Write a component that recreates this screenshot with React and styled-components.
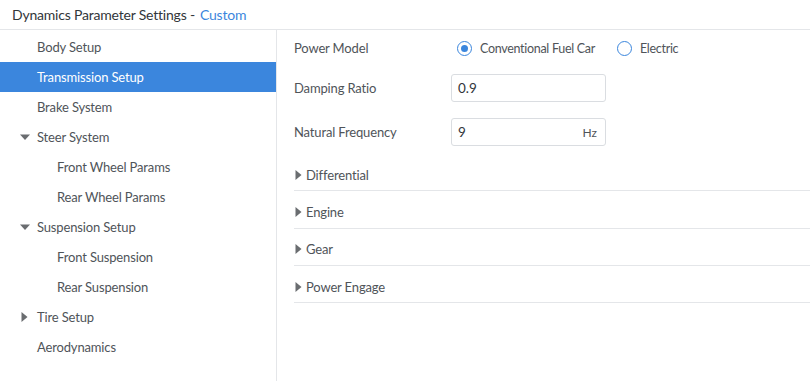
import React, { useState } from 'react'
import styled, { createGlobalStyle } from 'styled-components'

const GlobalStyle = createGlobalStyle`
  html, body { margin:0; padding:0; background:#fff; }
  body { font-family: Lato, "Noto Sans", sans-serif; color:#4f5459; }
  * { box-sizing:border-box; }
`

const Page = styled.div`
  width:810px;
  height:381px;
  display:flex;
  flex-direction:column;
  overflow:hidden;
`

const Header = styled.header`
  height:30px;
  flex:0 0 30px;
  display:flex;
  align-items:center;
  padding:0 12px 1px;
  border-bottom:1.5px solid #e4e6e9;
  font-size:14px;
  letter-spacing:-0.2px;
  color:#32363a;
  span { color:#3b86dd; margin-left:5px; }
`

const Body = styled.div`
  flex:1;
  display:flex;
  min-height:0;
`

const Sidebar = styled.nav`
  width:277px;
  flex:0 0 277px;
  border-right:1px solid #e4e6e9;
  padding-top:1.5px;
`

const NavItem = styled.div`
  height:30.1px;
  display:flex;
  align-items:center;
  padding-left:${p => p.$depth * 20 + 20}px;
  font-size:13px;
  letter-spacing:-0.15px;
  background:${p => p.$active ? '#3b86dd' : 'transparent'};
  color:${p => p.$active ? '#fff' : '#4f5459'};
`

const Caret = styled.span`
  width:${p => p.$w || 17}px;
  flex:0 0 ${p => p.$w || 17}px;
  display:flex;
  align-items:center;
  svg { display:block; }
`

const Content = styled.main`
  flex:1;
  padding:0 0 0 17px;
`

const FormRow = styled.div`
  display:flex;
  align-items:center;
  height:${p => p.$h}px;
`

const Label = styled.div`
  width:157px;
  font-size:13px;
  letter-spacing:-0.15px;
`

const RadioGroup = styled.div`
  display:flex;
  align-items:center;
  margin-left:6px;
`

const RadioOption = styled.label`
  display:flex;
  align-items:center;
  font-size:12.5px;
  letter-spacing:-0.3px;
  margin-right:22px;
  color:#4f5459;
`

const RadioCircle = styled.span`
  width:15px;
  height:15px;
  border-radius:50%;
  border:1.5px solid #3b86dd;
  margin-right:8px;
  display:flex;
  align-items:center;
  justify-content:center;
  &::after {
    content:'';
    width:7px;
    height:7px;
    border-radius:50%;
    background:${p => p.$checked ? '#3b86dd' : 'transparent'};
  }
`

const InputBox = styled.div`
  width:155px;
  height:28px;
  border:1px solid #dadde1;
  border-radius:3px;
  display:flex;
  align-items:center;
  justify-content:space-between;
  padding:0 8px 0 6px;
  font-size:13.5px;
  color:#32363a;
  small { font-size:12px; color:#4f5459; }
`

const Section = styled.div`
  height:37.3px;
  display:flex;
  align-items:center;
  border-bottom:1.5px solid #e4e6e9;
  font-size:13px;
  letter-spacing:-0.15px;
  padding-top:5px;
`

const Tri = ({ down }) => (
  <svg width="10" height="10" viewBox="0 0 10 10">
    {down
      ? <path d="M0 2.5 L10 2.5 L5 8 Z" fill="#6a6d70" />
      : <path d="M1.5 0 L7.5 5 L1.5 10 Z" fill="#6a6d70" />}
  </svg>
)

const nav = [
  { label: 'Body Setup', depth: 0 },
  { label: 'Transmission Setup', depth: 0, active: true },
  { label: 'Brake System', depth: 0 },
  { label: 'Steer System', depth: 0, caret: 'down' },
  { label: 'Front Wheel Params', depth: 1 },
  { label: 'Rear Wheel Params', depth: 1 },
  { label: 'Suspension Setup', depth: 0, caret: 'down' },
  { label: 'Front Suspension', depth: 1 },
  { label: 'Rear Suspension', depth: 1 },
  { label: 'Tire Setup', depth: 0, caret: 'right' },
  { label: 'Aerodynamics', depth: 0 },
]

export default function App() {
  const [model, setModel] = useState('fuel')
  return (
    <Page>
      <GlobalStyle />
      <Header>Dynamics Parameter Settings - <span>Custom</span></Header>
      <Body>
        <Sidebar>
          {nav.map(n => (
            <NavItem key={n.label} $depth={n.depth} $active={n.active}>
              <Caret>{n.caret && <Tri down={n.caret === 'down'} />}</Caret>
              {n.label}
            </NavItem>
          ))}
        </Sidebar>
        <Content>
          <FormRow $h={36}>
            <Label>Power Model</Label>
            <RadioGroup>
              <RadioOption onClick={() => setModel('fuel')}>
                <RadioCircle $checked={model === 'fuel'} />Conventional Fuel Car
              </RadioOption>
              <RadioOption onClick={() => setModel('electric')}>
                <RadioCircle $checked={model === 'electric'} />Electric
              </RadioOption>
            </RadioGroup>
          </FormRow>
          <FormRow $h={44}>
            <Label>Damping Ratio</Label>
            <InputBox>0.9</InputBox>
          </FormRow>
          <FormRow $h={44}>
            <Label>Natural Frequency</Label>
            <InputBox>9<small>Hz</small></InputBox>
          </FormRow>
          {['Differential', 'Engine', 'Gear', 'Power Engage'].map(s => (
            <Section key={s}>
              <Caret $w={12}><Tri /></Caret>
              {s}
            </Section>
          ))}
        </Content>
      </Body>
    </Page>
  )
}
